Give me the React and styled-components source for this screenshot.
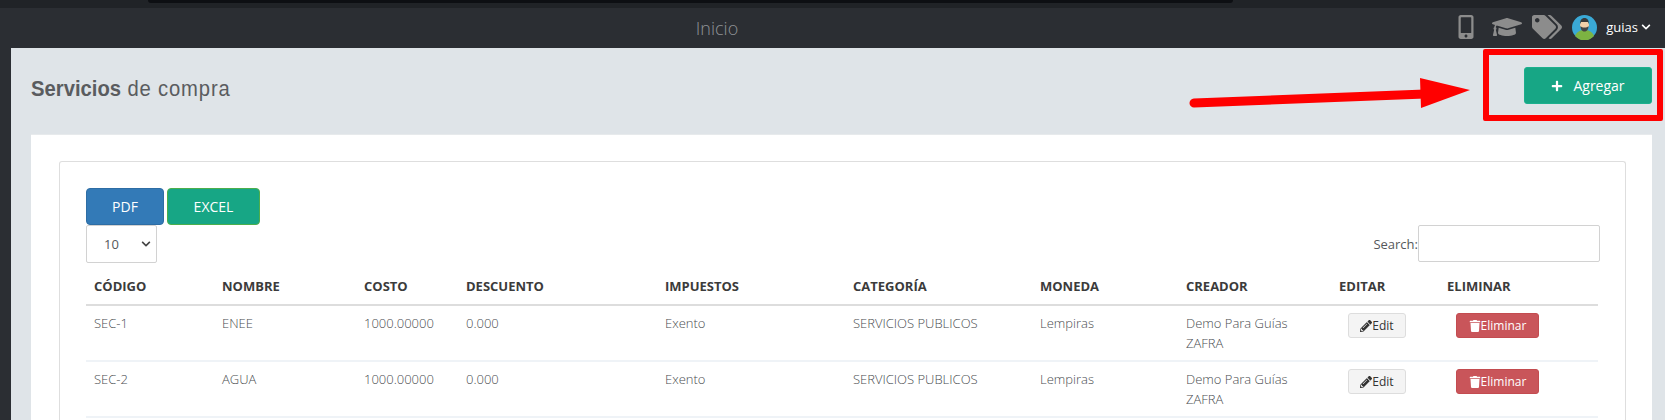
import React from "react";
import styled, { createGlobalStyle } from "styled-components";
import { FaMobileAlt, FaGraduationCap, FaTags, FaChevronDown, FaPencilAlt, FaTrash, FaPlus } from "react-icons/fa";

const GlobalStyle = createGlobalStyle`
  html, body {
    margin: 0;
    padding: 0;
    background: #2b2e33;
    overflow: hidden;
  }
  * {
    box-sizing: border-box;
  }
  body {
    font-family: "Open Sans", "Liberation Sans", sans-serif;
    font-size: 13px;
    color: #676a6c;
  }
`;

const Page = styled.div`
  position: relative;
  width: 1665px;
  height: 420px;
  overflow: hidden;
`;

const TopStrip = styled.div`
  height: 8px;
  background: #202327;
  padding-left: 148px;
`;

const BlackTab = styled.div`
  width: 1085px;
  height: 3px;
  background: #0d0f13;
  border-radius: 0 0 5px 5px;
`;

const Navbar = styled.div`
  height: 40px;
  background: #2b2e33;
  display: flex;
  align-items: center;
  justify-content: space-between;
  padding: 0 14px 0 0;
`;

const NavTitle = styled.div`
  width: 1434px;
  text-align: center;
  color: #8f9296;
  font-size: 18px;
  font-weight: 300;
`;

const NavIcons = styled.div`
  display: flex;
  align-items: center;
  color: #8c8c8c;
  padding-bottom: 2px;
`;

const NavIcon = styled.span`
  display: flex;
  font-size: ${(p) => p.$size}px;
  margin-right: ${(p) => p.$gap}px;
`;

const Avatar = styled.svg`
  width: 25px;
  height: 25px;
  margin-right: 9px;
`;

const UserName = styled.span`
  color: #fff;
  font-size: 13px;
  display: flex;
  align-items: center;
  gap: 3px;
`;

const Body = styled.div`
  display: flex;
`;

const Rail = styled.div`
  width: 11px;
  flex-shrink: 0;
`;

const Content = styled.div`
  flex: 1;
  height: 372px;
  background: #dfe4e8;
  padding: 19px 13px 0 20px;
`;

const Header = styled.div`
  display: flex;
  justify-content: space-between;
  align-items: flex-start;
  height: 67px;
`;

const Title = styled.h2`
  margin: 9px 0 0;
  font-family: "Liberation Sans", sans-serif;
  font-size: 22px;
  font-weight: 400;
  letter-spacing: 0.9px;
  color: #5a5c5f;
  transform: scaleX(0.92);
  transform-origin: left;

  strong {
    font-weight: 700;
    letter-spacing: 0;
  }
`;

const AddButton = styled.button`
  width: 128px;
  height: 37px;
  background: #17a685;
  border: 1px solid #1cb08e;
  border-radius: 3px;
  color: #fff;
  font-family: inherit;
  font-size: 14px;
  display: flex;
  align-items: center;
  justify-content: center;
  gap: 10px;
`;

const Panel = styled.div`
  background: #fff;
  height: 300px;
  padding: 26px 26px 0 28px;
  border-top: 1px solid #e7eaec;
`;

const Card = styled.div`
  height: 280px;
  border: 1px solid #dedede;
  border-bottom: none;
  border-radius: 3px 3px 0 0;
  padding: 26px 25px 0 26px;
`;

const ExportRow = styled.div`
  display: flex;
  gap: 3px;
`;

const ExportButton = styled.button`
  width: ${(p) => p.$width}px;
  height: 37px;
  border-radius: 4px;
  border: 1px solid ${(p) => p.$border};
  background: ${(p) => p.$bg};
  color: #fff;
  font-family: inherit;
  font-size: 14px;
  padding: 0;
`;

const ControlsRow = styled.div`
  display: flex;
  justify-content: space-between;
  align-items: flex-start;
  height: 42px;
`;

const LengthSelect = styled.div`
  width: 71px;
  height: 38px;
  border: 1px solid #d2d2d2;
  border-radius: 2px;
  display: flex;
  align-items: center;
  justify-content: space-between;
  padding: 0 5px 0 17px;
  color: #55585b;
  font-size: 13px;
  svg {
    font-size: 10px;
    color: #444;
  }
`;

const SearchBox = styled.label`
  display: flex;
  align-items: center;
  font-size: 13px;
  color: #55585b;
`;

const SearchInput = styled.input`
  width: 182px;
  height: 37px;
  border: 1px solid #d2d2d2;
  border-radius: 2px;
  background: #fff;
`;

const Table = styled.table`
  width: 1512px;
  border-collapse: collapse;
  table-layout: fixed;
`;

const Th = styled.th`
  width: ${(p) => p.$width}px;
  height: 38px;
  padding: 0 0 0 8px;
  text-align: left;
  font-size: 13px;
  font-weight: 700;
  color: #3b3b3b;
  border-bottom: 2px solid #dddddd;
`;

const Td = styled.td`
  height: 56px;
  padding: 7px 8px 0;
  vertical-align: top;
  font-size: 13px;
  font-weight: 300;
  line-height: 20px;
  color: #4a4d50;
  border-bottom: 2px solid #eff3f7;
`;

const RowButton = styled.button`
  display: inline-flex;
  align-items: center;
  justify-content: center;
  width: ${(p) => p.$width}px;
  height: 25px;
  margin: 0 0 0 ${(p) => p.$offset}px;
  padding: 0;
  border-radius: 3px;
  font-family: inherit;
  font-size: 12px;
  border: 1px solid ${(p) => p.$border};
  background: ${(p) => p.$bg};
  color: ${(p) => p.$color};
  svg {
    font-size: 12px;
  }
`;

const RedBox = styled.div`
  position: absolute;
  left: 1483px;
  top: 49px;
  width: 180px;
  height: 72px;
  border: 6px solid #ff0000;
  border-radius: 2px;
`;

const Arrow = styled.svg`
  position: absolute;
  left: 1180px;
  top: 70px;
  width: 300px;
  height: 50px;
`;

const columns = [
  ["CÓDIGO", 128],
  ["NOMBRE", 142],
  ["COSTO", 102],
  ["DESCUENTO", 199],
  ["IMPUESTOS", 188],
  ["CATEGORÍA", 187],
  ["MONEDA", 146],
  ["CREADOR", 153],
  ["EDITAR", 108],
  ["ELIMINAR", 159],
];

const rows = [
  { code: "SEC-1", name: "ENEE" },
  { code: "SEC-2", name: "AGUA" },
];

export default function App() {
  return (
    <Page>
      <GlobalStyle />
      <TopStrip>
        <BlackTab />
      </TopStrip>
      <Navbar>
        <NavTitle>Inicio</NavTitle>
        <NavIcons>
          <NavIcon $size={24} $gap={14}>
            <FaMobileAlt />
          </NavIcon>
          <NavIcon $size={30} $gap={10}>
            <FaGraduationCap />
          </NavIcon>
          <NavIcon $size={30} $gap={10}>
            <FaTags />
          </NavIcon>
          <Avatar viewBox="0 0 25 25">
            <circle cx="12.5" cy="12.5" r="12.5" fill="#3aa9d6" />
            <path d="M3 21c2-5 6-6 9.5-6s7.500 1 9.500 6a12.500 12.500 0 0 1-19 0z" fill="#7cb342" />
            <circle cx="12.5" cy="10" r="4.500" fill="#f2cfa8" />
            <path d="M8 9c0-4 2-6 4.500-6S17 5 17 9l-1-2H9z" fill="#3a3a3a" />
            <path d="M8.500 11c1 1.500 2 1.500 4 1.500s3 0 4-1.500c0 4-2 5.500-4 5.500s-4-1.500-4-5.500z" fill="#444" />
          </Avatar>
          <UserName>
            guias <FaChevronDown size={10} />
          </UserName>
        </NavIcons>
      </Navbar>
      <Body>
        <Rail />
        <Content>
          <Header>
            <Title>
              <strong>Servicios</strong> de compra
            </Title>
            <AddButton>
              <FaPlus size={12} /> Agregar
            </AddButton>
          </Header>
          <Panel>
            <Card>
              <ExportRow>
                <ExportButton $width={78} $bg="#337ab7" $border="#2e6da4">
                  PDF
                </ExportButton>
                <ExportButton $width={93} $bg="#17a685" $border="#4cae4c">
                  EXCEL
                </ExportButton>
              </ExportRow>
              <ControlsRow>
                <LengthSelect>
                  10 <FaChevronDown />
                </LengthSelect>
                <SearchBox>
                  Search:
                  <SearchInput />
                </SearchBox>
              </ControlsRow>
              <Table>
                <thead>
                  <tr>
                    {columns.map(([label, width]) => (
                      <Th key={label} $width={width}>
                        {label}
                      </Th>
                    ))}
                  </tr>
                </thead>
                <tbody>
                  {rows.map((row) => (
                    <tr key={row.code}>
                      <Td>{row.code}</Td>
                      <Td>{row.name}</Td>
                      <Td>1000.00000</Td>
                      <Td>0.000</Td>
                      <Td>Exento</Td>
                      <Td>SERVICIOS PUBLICOS</Td>
                      <Td>Lempiras</Td>
                      <Td>
                        Demo Para Guías
                        <br />
                        ZAFRA
                      </Td>
                      <Td>
                        <RowButton $width={58} $offset={9} $bg="#f4f4f4" $border="#dddddd" $color="#333">
                          <FaPencilAlt />
                          Edit
                        </RowButton>
                      </Td>
                      <Td>
                        <RowButton $width={83} $offset={9} $bg="#c9555a" $border="#c34c50" $color="#fff">
                          <FaTrash />
                          Eliminar
                        </RowButton>
                      </Td>
                    </tr>
                  ))}
                </tbody>
              </Table>
            </Card>
          </Panel>
        </Content>
      </Body>
      <RedBox />
      <Arrow viewBox="0 0 300 50">
        <line x1="14" y1="33" x2="245" y2="24" stroke="#ff0000" strokeWidth="9" strokeLinecap="round" />
        <polygon points="240,8 290,20 241,38" fill="#ff0000" />
      </Arrow>
    </Page>
  );
}
